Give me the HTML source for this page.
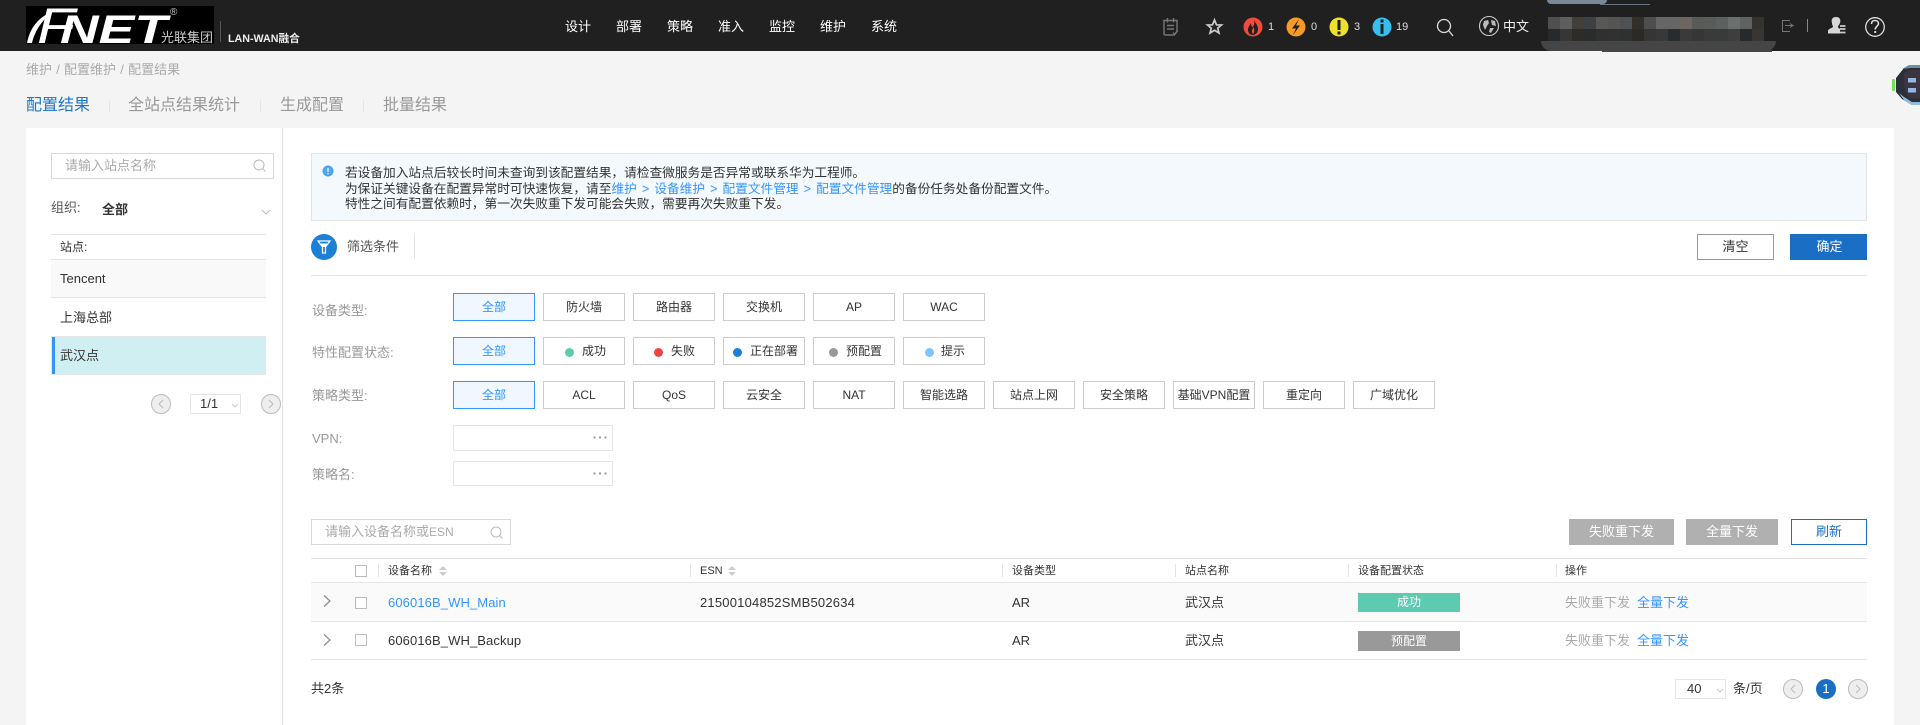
<!DOCTYPE html>
<html lang="zh-CN">
<head>
<meta charset="utf-8">
<title>配置结果</title>
<style>
html,body{margin:0;padding:0;width:1920px;height:725px;overflow:hidden;background:#f4f4f4;}
body{position:relative;font-family:"Liberation Sans","Noto Sans CJK SC",sans-serif;font-size:13px;color:#333;}
.a{position:absolute;box-sizing:border-box;}
.t{position:absolute;white-space:nowrap;line-height:20px;height:20px;}
.g{color:#999;}
.fb{position:absolute;box-sizing:border-box;width:82px;height:28px;border:1px solid #ccc;background:#fff;font-size:12px;line-height:26px;text-align:center;color:#333;white-space:nowrap;}
.fb.on{border-color:#3395ff;background:#f0f7ff;color:#3395ff;}
.d{position:absolute;width:9px;height:9px;border-radius:50%;top:10px;}
.fb .l{position:absolute;top:0;line-height:26px;}
.ln{position:absolute;height:1px;background:#e5e5e5;}
.vl{position:absolute;width:1px;background:#e5e5e5;}
.cb{position:absolute;box-sizing:border-box;width:12px;height:12px;border:1px solid #bbb;background:#fff;}
.c{position:absolute;box-sizing:border-box;width:20px;height:20px;border-radius:50%;border:1px solid #bbb;background:#eee;}
.btn{position:absolute;box-sizing:border-box;text-align:center;font-size:13px;white-space:nowrap;}
svg{position:absolute;overflow:visible;}
.nt{font-size:12.7px;color:#333;}
</style>
</head>
<body>
<!-- header -->
<div class="a" style="left:0;top:0;width:1920px;height:51px;background:#202020;"></div>
<svg style="left:0;top:0" width="260" height="51" viewBox="0 0 260 51">
<rect x="26" y="6" width="188" height="38" fill="#000"/>
<text x="37" y="43" font-family="Liberation Sans" font-size="50" font-style="italic" fill="#fff" textLength="38" lengthAdjust="spacingAndGlyphs">F</text>
<path d="M27 43C30 28 38 17 54 11C43 19 35 30 32 43Z" fill="#fff"/>
<text x="60" y="43" font-family="Liberation Sans" font-size="40" font-weight="bold" font-style="italic" fill="#fff" textLength="107" lengthAdjust="spacingAndGlyphs">NET</text>
<text x="170" y="15" font-family="Liberation Sans" font-size="10" fill="#ccc">®</text>
<text x="161" y="42" font-family="Liberation Sans,Noto Sans CJK SC" font-size="13" fill="#ccc">光联集团</text>
<rect x="220" y="21" width="1" height="21" fill="#555"/>
<text x="228" y="42" font-family="Liberation Sans,Noto Sans CJK SC" font-size="10.7" font-weight="bold" fill="#eee">LAN-WAN融合</text>
</svg>
<div class="t" style="left:565px;top:17px;color:#fff;">设计</div>
<div class="t" style="left:616px;top:17px;color:#fff;">部署</div>
<div class="t" style="left:667px;top:17px;color:#fff;">策略</div>
<div class="t" style="left:718px;top:17px;color:#fff;">准入</div>
<div class="t" style="left:769px;top:17px;color:#fff;">监控</div>
<div class="t" style="left:820px;top:17px;color:#fff;">维护</div>
<div class="t" style="left:871px;top:17px;color:#fff;">系统</div>

<!-- header icons -->
<svg style="left:1140px;top:0" width="330" height="51" viewBox="1140 0 330 51">
<path d="M1164 20.500H1177V31.500L1174 35H1165.500Q1164 35 1164 33.500Z M1167.500 18V22.500 M1173.500 18V22.500 M1167 25.500H1174 M1167 29H1174" fill="none" stroke="#777" stroke-width="1.4"/>
<path d="M1173 32.500L1175 34.500L1178 30.500" fill="none" stroke="#777" stroke-width="1"/>
<path d="M1214.500 20L1216.500 24.800L1221.500 25L1217.700 28.200L1219 33L1214.500 30.300L1210 33L1211.300 28.200L1207.500 25L1212.500 24.800Z" fill="none" stroke="#ccc" stroke-width="1.700"/>
<circle cx="1253" cy="27" r="9.500" fill="#f04b3c"/>
<path d="M1254 19C1255 23 1258 25 1258 29C1258 33 1255 35 1253 35C1250 35 1248 33 1248 30C1248 27 1250 25 1251 23C1251 26 1252 27 1253 27C1254 25 1255 23 1254 19Z" fill="#202020"/>
<path d="M1253 34C1251 32 1252 29 1254 27C1254 30 1255 32 1253 34Z" fill="#f04b3c"/>
<circle cx="1296" cy="27" r="9.500" fill="#f79a28"/>
<path d="M1299 19L1292 28.500H1296L1293 35L1300 25.500H1296Z" fill="#202020"/>
<circle cx="1339" cy="27" r="9.500" fill="#efe02d"/>
<rect x="1337.500" y="20" width="3" height="10" fill="#202020"/>
<rect x="1337.500" y="31.500" width="3" height="3" fill="#202020"/>
<circle cx="1382" cy="27" r="9.500" fill="#37c0ef"/>
<rect x="1380.500" y="19.500" width="3" height="3" fill="#202020"/>
<rect x="1380.500" y="24" width="3" height="10" fill="#202020"/>
<circle cx="1444" cy="26" r="6.500" fill="none" stroke="#ddd" stroke-width="1.300"/>
<path d="M1449 31L1453 36" stroke="#ddd" stroke-width="1.300"/>
<circle cx="1489" cy="26" r="9.500" fill="none" stroke="#ccc" stroke-width="1.100"/>
<path d="M1484 21L1488 20L1489 23L1487 26L1485 30L1483 25Z M1491 20L1495 21L1496 26L1492 25Z M1490 28L1494 28L1491 33L1489 32Z" fill="#bbb"/>
</svg>
<div class="t" style="left:1268px;top:17px;font-size:11px;color:#ddd;">1</div>
<div class="t" style="left:1311px;top:17px;font-size:11px;color:#ddd;">0</div>
<div class="t" style="left:1354px;top:17px;font-size:11px;color:#ddd;">3</div>
<div class="t" style="left:1396px;top:17px;font-size:11px;color:#ddd;">19</div>
<div class="t" style="left:1503px;top:17px;color:#eee;">中文</div>

<!-- mosaic redaction -->
<div class="a" style="left:1547px;top:0;width:60px;height:4px;background:#7a8797;border-radius:0 0 30px 30px;"></div>
<div class="a" style="left:1600px;top:4px;width:50px;height:1px;background:#6a7480;"></div>
<div class="a" style="left:1541px;top:41px;width:235px;height:10px;background:#454545;border-radius:0 0 14px 14px;"></div>
<div class="a" style="left:1602px;top:50px;width:170px;height:2px;background:#454545;"></div>
<div class="a" style="left:1548px;top:17px;width:216px;height:24px;display:grid;grid-template-columns:repeat(18,12px);grid-template-rows:12px 12px;">
<i style="background:#4f4f4f"></i><i style="background:#5e5e5e"></i><i style="background:#423f3b"></i><i style="background:#3d4144"></i><i style="background:#585858"></i><i style="background:#575554"></i><i style="background:#4e5254"></i><i style="background:#33302c"></i><i style="background:#4e4e4e"></i><i style="background:#666"></i><i style="background:#666"></i><i style="background:#6d6560"></i><i style="background:#595b58"></i><i style="background:#595c59"></i><i style="background:#5c605e"></i><i style="background:#6b6f6d"></i><i style="background:#616363"></i><i style="background:#35332f"></i>
<i style="background:#272a2c"></i><i style="background:#363636"></i><i style="background:#2d2c29"></i><i style="background:#2a2b2b"></i><i style="background:#303030"></i><i style="background:#313130"></i><i style="background:#2e3130"></i><i style="background:#2b2a27"></i><i style="background:#373533"></i><i style="background:#383838"></i><i style="background:#292c2f"></i><i style="background:#3a3a3a"></i><i style="background:#353636"></i><i style="background:#3a3a3a"></i><i style="background:#393a3a"></i><i style="background:#3e3e3e"></i><i style="background:#272a2d"></i><i style="background:#383632"></i>
</div>

<svg style="left:1775px;top:0" width="125" height="51" viewBox="1775 0 125 51">
<path d="M1790 20.500H1782.500V31.500H1790" fill="none" stroke="#777" stroke-width="1"/>
<path d="M1785 25.500H1792M1790 23.500L1793 25.500L1790 27.500" fill="none" stroke="#777" stroke-width="1"/>
<rect x="1807" y="19" width="1" height="13" fill="#888"/>
<path d="M1836 17C1840 17 1841 20 1840 23C1839 25 1838 26 1838 27C1838 28 1839 28 1840 29V33.500H1828V31C1828 29 1832 28 1833 27C1833 26 1832 25 1832 23C1831 20 1832 17 1836 17Z" fill="#d8d8d8"/>
<path d="M1840 26H1845.500M1840 29H1845.500M1840 32.500H1845.500" stroke="#ccc" stroke-width="1.800"/>
<circle cx="1875" cy="27" r="9.300" fill="none" stroke="#ddd" stroke-width="1.300"/>
<path d="M1871.500 24C1871.500 21.500 1873 20.500 1875 20.500C1877 20.500 1878.500 21.800 1878.500 23.700C1878.500 26 1875.200 26.500 1875.200 29.500" fill="none" stroke="#ddd" stroke-width="1.600"/>
<rect x="1874.200" y="31" width="2" height="2" fill="#ddd"/>
</svg>

<!-- breadcrumb & tabs -->
<div class="t" style="left:26px;top:60px;color:#aaa;word-spacing:0.6px;">维护 / 配置维护 / 配置结果</div>
<div class="t" style="left:26px;top:96px;font-size:16px;color:#1c76c9;">配置结果</div>
<div class="vl" style="left:109px;top:100px;height:12px;"></div>
<div class="t" style="left:128px;top:96px;font-size:16px;color:#999;">全站点结果统计</div>
<div class="vl" style="left:260px;top:100px;height:12px;"></div>
<div class="t" style="left:280px;top:96px;font-size:16px;color:#999;">生成配置</div>
<div class="vl" style="left:363px;top:100px;height:12px;"></div>
<div class="t" style="left:383px;top:96px;font-size:16px;color:#999;">批量结果</div>

<!-- bot -->
<svg style="left:1890px;top:62px" width="30" height="46" viewBox="1890 62 30 46">
<path d="M1896 78L1904 68L1912 65H1920V105H1912L1902 99L1896 92Z" fill="#2a2f38"/>
<path d="M1899 93L1904 100L1912 105H1920V102H1912L1904 97Z" fill="#8fbce0"/>
<path d="M1902 69L1909 65H1920V68H1910Z" fill="#6e8da8"/>
<path d="M1904 73L1910 70H1920V98H1909C1904 92 1903 80 1904 73Z" fill="#3a3540"/>
<rect x="1892" y="79" width="3" height="12" rx="1" fill="#6fe05a"/>
<rect x="1908" y="78" width="8" height="4.500" fill="#94b7e0"/>
<rect x="1908" y="88" width="8" height="4.500" fill="#94b7e0"/>
</svg>

<!-- main panel -->
<div class="a" style="left:26px;top:128px;width:1868px;height:597px;background:#fff;"></div>
<div class="vl" style="left:282px;top:128px;height:597px;width:1px;background:#e0e0e0;"></div>

<!-- left column -->
<div class="a" style="left:51px;top:153px;width:223px;height:26px;border:1px solid #d9d9d9;"></div>
<div class="t" style="left:65px;top:156px;color:#aaa;">请输入站点名称</div>
<svg style="left:253px;top:159px" width="14" height="14" viewBox="0 0 14 14"><circle cx="6" cy="6" r="5" fill="none" stroke="#bbb"/><path d="M9.500 9.500L12.500 12.500" stroke="#bbb"/></svg>
<div class="t" style="left:51px;top:198px;color:#555;">组织:</div>
<div class="t" style="left:102px;top:200px;font-weight:bold;color:#333;">全部</div>
<svg style="left:261px;top:209px" width="10" height="6" viewBox="0 0 10 6"><path d="M1 1L5 5L9 1" fill="none" stroke="#bbb"/></svg>
<div class="ln" style="left:51px;top:234px;width:215px;"></div>
<div class="t" style="left:60px;top:237px;font-size:12px;color:#333;">站点:</div>
<div class="ln" style="left:51px;top:259px;width:215px;"></div>
<div class="a" style="left:51px;top:260px;width:215px;height:37px;background:#f9f9f9;"></div>
<div class="t" style="left:60px;top:269px;">Tencent</div>
<div class="ln" style="left:51px;top:297px;width:215px;"></div>
<div class="t" style="left:60px;top:308px;">上海总部</div>
<div class="ln" style="left:51px;top:336px;width:215px;"></div>
<div class="a" style="left:51px;top:337px;width:215px;height:37px;background:#d0eff3;"></div>
<div class="a" style="left:52px;top:337px;width:3px;height:37px;background:#3395ff;"></div>
<div class="t" style="left:60px;top:346px;">武汉点</div>
<div class="ln" style="left:51px;top:374px;width:215px;"></div>
<div class="c" style="left:151px;top:394px;"></div>
<svg style="left:158px;top:399px" width="6" height="10" viewBox="0 0 6 10"><path d="M5 1L1 5L5 9" fill="none" stroke="#bbb"/></svg>
<div class="a" style="left:190px;top:394px;width:51px;height:20px;border:1px solid #e5e5e5;"></div>
<div class="t" style="left:200px;top:394px;">1/1</div>
<svg style="left:231px;top:403px" width="8" height="5" viewBox="0 0 8 5"><path d="M1 1L4 4L7 1" fill="none" stroke="#ccc"/></svg>
<div class="c" style="left:261px;top:394px;"></div>
<svg style="left:268px;top:399px" width="6" height="10" viewBox="0 0 6 10"><path d="M1 1L5 5L1 9" fill="none" stroke="#bbb"/></svg>

<!-- notice -->
<div class="a" style="left:311px;top:153px;width:1556px;height:68px;background:#f4f9fd;border:1px solid #e5e5e5;"></div>
<svg style="left:322px;top:165px" width="12" height="12" viewBox="0 0 12 12"><circle cx="6" cy="6" r="5.500" fill="#4da6f0"/><rect x="5.400" y="3" width="1.200" height="4" fill="#fff"/><rect x="5.400" y="8" width="1.200" height="1.200" fill="#fff"/></svg>
<div class="t nt" style="left:345px;top:163px;">若设备加入站点后较长时间未查询到该配置结果，请检查微服务是否异常或联系华为工程师。</div>
<div class="t nt" style="left:345px;top:179px;">为保证关键设备在配置异常时可快速恢复，请至<span style="color:#3395ff;word-spacing:1.5px;">维护 &gt; 设备维护 &gt; 配置文件管理 &gt; 配置文件管理</span>的备份任务处备份配置文件。</div>
<div class="t nt" style="left:345px;top:194px;">特性之间有配置依赖时，第一次失败重下发可能会失败，需要再次失败重下发。</div>

<!-- filter head -->
<svg style="left:311px;top:234px" width="26" height="26" viewBox="0 0 26 26"><circle cx="13" cy="13" r="13" fill="#1c80d4"/><path d="M7 7H19L14.500 13V19H11.500V13Z" fill="none" stroke="#fff" stroke-width="1.200"/><path d="M8.500 9.500H17.500L14 13H12Z" fill="#fff"/></svg>
<div class="t" style="left:347px;top:237px;color:#555;">筛选条件</div>
<div class="vl" style="left:414px;top:234px;height:25px;"></div>
<div class="btn" style="left:1697px;top:234px;width:77px;height:26px;border:1px solid #999;background:#fff;line-height:24px;color:#333;">清空</div>
<div class="btn" style="left:1790px;top:234px;width:77px;height:26px;background:#1a6fc4;line-height:26px;color:#fff;padding-left:2px;">确定</div>
<div class="ln" style="left:311px;top:275px;width:1556px;"></div>

<!-- filter rows -->
<div class="t g" style="left:312px;top:301px;">设备类型:</div>
<div class="fb on" style="left:453px;top:293px;">全部</div>
<div class="fb" style="left:543px;top:293px;">防火墙</div>
<div class="fb" style="left:633px;top:293px;">路由器</div>
<div class="fb" style="left:723px;top:293px;">交换机</div>
<div class="fb" style="left:813px;top:293px;">AP</div>
<div class="fb" style="left:903px;top:293px;">WAC</div>

<div class="t g" style="left:312px;top:343px;">特性配置状态:</div>
<div class="fb on" style="left:453px;top:337px;">全部</div>
<div class="fb" style="left:543px;top:337px;"><span class="d" style="left:21px;background:#5ccbb0;"></span><span class="l" style="left:38px;">成功</span></div>
<div class="fb" style="left:633px;top:337px;"><span class="d" style="left:20px;background:#e84545;"></span><span class="l" style="left:37px;">失败</span></div>
<div class="fb" style="left:723px;top:337px;"><span class="d" style="left:9px;background:#1a80d9;"></span><span class="l" style="left:26px;">正在部署</span></div>
<div class="fb" style="left:813px;top:337px;"><span class="d" style="left:15px;background:#999;"></span><span class="l" style="left:32px;">预配置</span></div>
<div class="fb" style="left:903px;top:337px;"><span class="d" style="left:21px;background:#80c4ff;"></span><span class="l" style="left:37px;">提示</span></div>

<div class="t g" style="left:312px;top:386px;">策略类型:</div>
<div class="fb on" style="left:453px;top:381px;">全部</div>
<div class="fb" style="left:543px;top:381px;">ACL</div>
<div class="fb" style="left:633px;top:381px;">QoS</div>
<div class="fb" style="left:723px;top:381px;">云安全</div>
<div class="fb" style="left:813px;top:381px;">NAT</div>
<div class="fb" style="left:903px;top:381px;">智能选路</div>
<div class="fb" style="left:993px;top:381px;">站点上网</div>
<div class="fb" style="left:1083px;top:381px;">安全策略</div>
<div class="fb" style="left:1173px;top:381px;">基础VPN配置</div>
<div class="fb" style="left:1263px;top:381px;">重定向</div>
<div class="fb" style="left:1353px;top:381px;">广域优化</div>

<div class="t g" style="left:312px;top:429px;">VPN:</div>
<div class="a" style="left:453px;top:425px;width:160px;height:26px;border:1px solid #e5e5e5;"></div>
<svg style="left:593px;top:436px" width="14" height="3" viewBox="0 0 14 3"><rect x="0.500" y="0.500" width="2" height="2" fill="#999"/><rect x="6" y="0.500" width="2" height="2" fill="#999"/><rect x="11.500" y="0.500" width="2" height="2" fill="#999"/></svg>
<div class="t g" style="left:312px;top:465px;">策略名:</div>
<div class="a" style="left:453px;top:461px;width:160px;height:25px;border:1px solid #e5e5e5;"></div>
<svg style="left:593px;top:472px" width="14" height="3" viewBox="0 0 14 3"><rect x="0.500" y="0.500" width="2" height="2" fill="#999"/><rect x="6" y="0.500" width="2" height="2" fill="#999"/><rect x="11.500" y="0.500" width="2" height="2" fill="#999"/></svg>

<!-- table toolbar -->
<div class="a" style="left:311px;top:519px;width:200px;height:26px;border:1px solid #d9d9d9;"></div>
<div class="t" style="left:325px;top:522px;color:#aaa;">请输入设备名称或<span style="font-size:12px;">ESN</span></div>
<svg style="left:490px;top:526px" width="14" height="14" viewBox="0 0 14 14"><circle cx="6" cy="6" r="5" fill="none" stroke="#bbb"/><path d="M9.500 9.500L12.500 12.500" stroke="#bbb"/></svg>
<div class="btn" style="left:1569px;top:519px;width:105px;height:26px;background:#b0b0b0;line-height:26px;color:#fff;">失败重下发</div>
<div class="btn" style="left:1686px;top:519px;width:92px;height:26px;background:#b0b0b0;line-height:26px;color:#fff;">全量下发</div>
<div class="btn" style="left:1791px;top:519px;width:76px;height:26px;border:1px solid #1a6fc4;background:#fff;line-height:24px;color:#1a6fc4;">刷新</div>

<!-- table -->
<div class="ln" style="left:311px;top:558px;width:1556px;"></div>
<div class="ln" style="left:311px;top:582px;width:1556px;"></div>
<div class="a" style="left:311px;top:583px;width:1556px;height:38px;background:#fafafa;"></div>
<div class="ln" style="left:311px;top:621px;width:1556px;"></div>
<div class="ln" style="left:311px;top:659px;width:1556px;"></div>

<div class="cb" style="left:355px;top:565px;"></div>
<div class="vl" style="left:378px;top:564px;height:13px;"></div>
<div class="t" style="left:388px;top:561px;font-size:11px;">设备名称</div>
<svg style="left:439px;top:566px" width="8" height="10" viewBox="0 0 8 10"><path d="M4 0L8 4H0Z M0 6H8L4 10Z" fill="#ccc"/></svg>
<div class="vl" style="left:690px;top:564px;height:13px;"></div>
<div class="t" style="left:700px;top:561px;font-size:11px;">ESN</div>
<svg style="left:728px;top:566px" width="8" height="10" viewBox="0 0 8 10"><path d="M4 0L8 4H0Z M0 6H8L4 10Z" fill="#ccc"/></svg>
<div class="vl" style="left:1002px;top:564px;height:13px;"></div>
<div class="t" style="left:1012px;top:561px;font-size:11px;">设备类型</div>
<div class="vl" style="left:1175px;top:564px;height:13px;"></div>
<div class="t" style="left:1185px;top:561px;font-size:11px;">站点名称</div>
<div class="vl" style="left:1348px;top:564px;height:13px;"></div>
<div class="t" style="left:1358px;top:561px;font-size:11px;">设备配置状态</div>
<div class="vl" style="left:1556px;top:564px;height:13px;"></div>
<div class="t" style="left:1565px;top:561px;font-size:11px;">操作</div>

<svg style="left:323px;top:595px" width="8" height="12" viewBox="0 0 8 12"><path d="M1 0.500L7 6L1 11.500" fill="none" stroke="#888" stroke-width="1.200"/></svg>
<div class="cb" style="left:355px;top:597px;"></div>
<div class="t" style="left:388px;top:593px;color:#3395ff;letter-spacing:0.1px;">606016B_WH_Main</div>
<div class="t" style="left:700px;top:593px;letter-spacing:0.2px;">21500104852SMB502634</div>
<div class="t" style="left:1012px;top:593px;">AR</div>
<div class="t" style="left:1185px;top:593px;">武汉点</div>
<div class="btn" style="left:1358px;top:593px;width:102px;height:19px;background:#5ccbb0;color:#fff;font-size:12px;line-height:19px;">成功</div>
<div class="t" style="left:1565px;top:593px;color:#aaa;">失败重下发</div>
<div class="t" style="left:1637px;top:593px;color:#3395ff;">全量下发</div>

<svg style="left:323px;top:634px" width="8" height="12" viewBox="0 0 8 12"><path d="M1 0.500L7 6L1 11.500" fill="none" stroke="#888" stroke-width="1.200"/></svg>
<div class="cb" style="left:355px;top:634px;"></div>
<div class="t" style="left:388px;top:631px;letter-spacing:0.1px;">606016B_WH_Backup</div>
<div class="t" style="left:1012px;top:631px;">AR</div>
<div class="t" style="left:1185px;top:631px;">武汉点</div>
<div class="btn" style="left:1358px;top:631px;width:102px;height:20px;background:#999;color:#fff;font-size:12px;line-height:20px;">预配置</div>
<div class="t" style="left:1565px;top:631px;color:#aaa;">失败重下发</div>
<div class="t" style="left:1637px;top:631px;color:#3395ff;">全量下发</div>

<!-- footer -->
<div class="t" style="left:311px;top:679px;">共2条</div>
<div class="a" style="left:1675px;top:679px;width:51px;height:20px;border:1px solid #e5e5e5;"></div>
<div class="t" style="left:1687px;top:679px;">40</div>
<svg style="left:1716px;top:688px" width="8" height="5" viewBox="0 0 8 5"><path d="M1 1L4 4L7 1" fill="none" stroke="#ccc"/></svg>
<div class="t" style="left:1733px;top:679px;">条/页</div>
<div class="c" style="left:1783px;top:679px;"></div>
<svg style="left:1790px;top:684px" width="6" height="10" viewBox="0 0 6 10"><path d="M5 1L1 5L5 9" fill="none" stroke="#bbb"/></svg>
<div class="a" style="left:1816px;top:679px;width:20px;height:20px;border-radius:50%;background:#1a6fc4;color:#fff;text-align:center;line-height:20px;font-size:13px;">1</div>
<div class="c" style="left:1848px;top:679px;"></div>
<svg style="left:1855px;top:684px" width="6" height="10" viewBox="0 0 6 10"><path d="M1 1L5 5L1 9" fill="none" stroke="#bbb"/></svg>
</body>
</html>
